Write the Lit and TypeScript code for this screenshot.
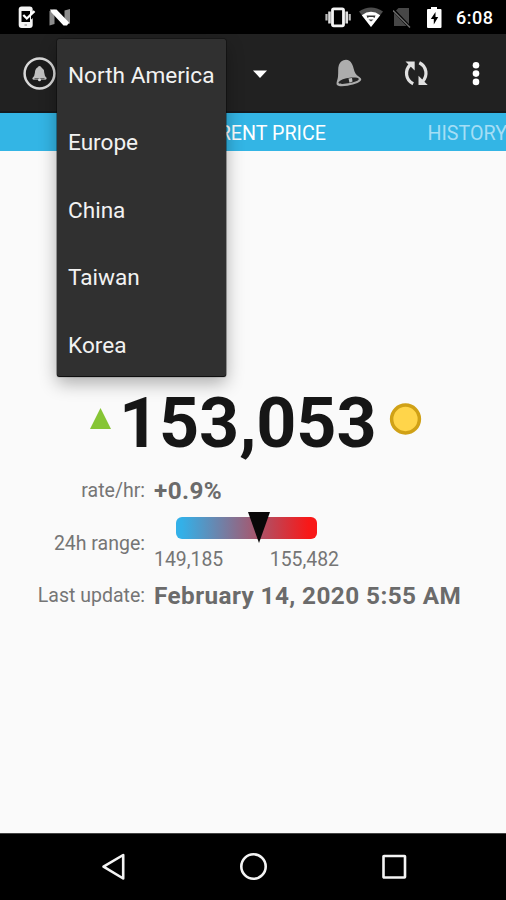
import { LitElement, html, css, svg } from "lit";
import { customElement, property } from "lit/decorators.js";

@customElement("status-bar")
class StatusBar extends LitElement {
  static styles = css`
    :host { display: flex; height: 34px; background: #000; color: #fff; align-items: center; }
    svg { display: block; flex: none; }
    .phone { margin-left: 18px; }
    .n { margin-left: 13px; }
    .gap { flex: 1; }
    .wifi { margin-left: 8px; }
    .sim { margin-left: 10px; }
    .battery { margin-left: 15px; }
    .time { font-size: 18px; font-weight: 500; line-height: 34px; width: 50px; margin-left: 14px; padding-top: 2px; box-sizing: border-box; letter-spacing: 0.5px; }
  `;
  render() {
    return html`
      <svg class="phone" width="18" height="34" viewBox="0 0 18 34">
        <rect x=".7" y="6.500" width="14" height="21.500" rx="3" fill="#f4f4f4"/>
        <path d="M3.500 11h8.500v11H3.500z" fill="#000"/>
        <path d="M13 14.500l4-3v5l-4 3z" fill="#000"/>
        <path d="M5.300 15l3.500 3.500 7.700-7.300" fill="none" stroke="#fff" stroke-width="2.300"/>
        <path d="M6.500 25h2.500" stroke="#999" stroke-width="1.300"/>
      </svg>
      <svg class="n" width="22" height="34" viewBox="0 0 22 34">
        <path d="M.5 11l5-1.500V24l-5 1.500z" fill="#8c8c8c"/>
        <path d="M15.500 10.500l5.500-1.500v14.500l-5.500 1.500z" fill="#8c8c8c"/>
        <path d="M1 9.500h6.500L20 22.500l-2 3h-3.500L2.500 12.500z" fill="#fff"/>
      </svg>
      <span class="gap"></span>
      <svg width="27" height="34" viewBox="0 0 27 34">
        <rect x="8.500" y="8.800" width="11" height="17" rx="1.300" fill="none" stroke="#f4f4f4" stroke-width="2.800"/>
        <path d="M5.500 11.500v12M22.700 11.500v12" stroke="#ddd" stroke-width="2.600"/>
        <path d="M2.500 14v6.500M25.700 14v6.500" stroke="#bbb" stroke-width="2.200"/>
      </svg>
      <svg class="wifi" width="24" height="34" viewBox="0 0 24 34">
        <path d="M0 11.500Q12 3.500 24 11.500L12 27z" fill="#4d4d4d"/>
        <path d="M2.800 15.200Q12 8.500 21.200 15.200L12 27z" fill="#fff"/>
        <path d="M7.500 15.500h9l-1 2.500-1.500-1h-4l-1.500 1z" fill="#333"/>
        <path d="M9.500 19.500h5l-2.500 2z" fill="#444"/>
      </svg>
      <svg class="sim" width="18" height="34" viewBox="0 0 18 34">
        <path d="M5.500 8H16v18H1V12.500z" fill="#474747"/>
        <path d="M0 9.500l17 18" stroke="#000" stroke-width="3"/>
        <path d="M0 10.500l17 17" stroke="#6c6c6c" stroke-width="1.500"/>
      </svg>
      <svg class="battery" width="16" height="34" viewBox="0 0 16 34">
        <path d="M5 7h6v2h3.500q1 0 1 1v17q0 1-1 1H2q-1 0-1-1V10q0-1 1-1h3z" fill="#fff"/>
        <path d="M9.500 12L4.800 19h3v5.500l4.400-7.500H9.500z" fill="#000"/>
      </svg>
      <span class="time">6:08</span>`;
  }
}

@customElement("tool-bar")
class ToolBar extends LitElement {
  static styles = css`
    :host { display: flex; height: 79px; background: #212121; align-items: center; box-sizing: border-box; border-bottom: 2px solid #141a1e; padding-top: 2px; }
    svg { display: block; flex: none; }
    .logo { margin-left: 22px; }
    .caret { margin-left: 196px; }
    .bell { margin-left: 68px; }
    .sync { margin-left: 41px; }
    .more { margin-left: 41px; }
  `;
  render() {
    return html`
      <svg class="logo" width="35" height="36" viewBox="0 0 35 36">
        <circle cx="17.500" cy="17.500" r="14.900" fill="#1c1c1c" stroke="#d8d8d8" stroke-width="2.500"/>
        <path d="M17.500 10q1.500 0 2 1.500 2.500 1.500 2.700 5 .2 3.500 2.500 5.500 0 1.500-1.500 1.700H12q-1.500 0-1.700-1.500 2.400-2 2.600-5.500.2-4 2.600-5.200.5-1.500 2-1.500z" fill="#c0c0c0"/>
        <path d="M12.500 22.800h10" stroke="#444" stroke-width="1"/>
        <circle cx="17.500" cy="23.800" r="1.500" fill="#ddd"/>
      </svg>
      <svg class="caret" width="14" height="36" viewBox="0 0 14 36"><path d="M0 14.500h14l-7 7.500z" fill="#fff"/></svg>
      <svg class="bell" width="28" height="36" viewBox="0 0 28 36">
        <path d="M8.500 4.200Q14 2.500 17 8c1.600 3 1.800 6.700 3.500 9.500 1.500 2.500 5 3.500 5.700 5.500.4 2.500-4.200 4.300-8.200 5.500-5 1.300-13.500 2.800-16 .5-1.200-2 .7-5 1-8.500C3.500 16 2.700 12 3.900 9c.9-2.300 2.400-4.200 4.600-4.800z" fill="#adadad"/>
        <path d="M3.300 26.700c1.500-3 7-4.500 11.500-5 3.500-.3 9-.3 9 1.300 0 2-6 3.500-9 4-4 .7-10 1.700-11.500-.3z" fill="#242424"/>
        <path d="M13.500 22.500l3.500-.5.500 3.500-3 1.200z" fill="#bdbdbd"/>
      </svg>
      <svg class="sync" width="26" height="36" viewBox="0 0 26 36">
        <g fill="none" stroke="#e0e0e0" stroke-width="3.200">
          <path d="M9.200 27.800C1.500 24 .5 14.500 6 9"/>
          <path d="M15.300 6.800c7.700 3.800 8.700 13.300 3.200 18.800"/>
        </g>
        <path d="M1.500 5.500h9.200v9z" fill="#e0e0e0"/>
        <path d="M14.500 19.700v9.300h9.200z" fill="#e0e0e0"/>
      </svg>
      <svg class="more" width="10" height="36" viewBox="0 0 10 36" fill="#fff">
        <circle cx="5" cy="9.300" r="3.300"/><circle cx="5" cy="17.600" r="3.300"/><circle cx="5" cy="25.900" r="3.300"/>
      </svg>`;
  }
}

@customElement("region-menu")
class RegionMenu extends LitElement {
  @property({ attribute: false }) items: string[] = [];
  static styles = css`
    :host { display: block; box-sizing: border-box; width: 169px; height: 337px; padding-top: 2.500px; background: #303030; border-radius: 2px;
      box-shadow: 0 0 0 0.5px rgba(0,0,0,.5), 0 1px 1px #000, 0 7px 18px rgba(0,0,0,.32); }
    .item { height: 67.500px; line-height: 67.500px; padding-left: 11px; font-size: 22.600px; color: #f2f2f2; white-space: nowrap; }
  `;
  render() {
    return this.items.map((t) => html`<div class="item"><span>${t}</span></div>`);
  }
}

@customElement("range-bar")
class RangeBar extends LitElement {
  @property({ type: Number }) low = 0;
  @property({ type: Number }) high = 1;
  @property({ type: Number }) value = 0;
  static styles = css`
    :host { display: block; width: 185px; }
    .track { position: relative; width: 141px; height: 22px; margin-left: 22px; border-radius: 6px; background: linear-gradient(90deg, #33b0e8 4%, #f81818 94%); }
    .slot { position: absolute; left: -2px; right: 22px; top: -5px; }
    svg { position: absolute; left: 0; top: 0; display: block; }
    .ends { display: flex; justify-content: space-between; font-size: 19.400px; line-height: 24px; margin-top: 9px; color: #757575; }
  `;
  render() {
    const pct = ((this.value - this.low) / (this.high - this.low)) * 100;
    return html`
      <div class="track"><div class="slot">
        <svg width="22" height="31" viewBox="0 0 22 31" style="left:${pct}%"><path d="M0 0h22L11 31z" fill="#0a0809"/></svg>
      </div></div>
      <div class="ends"><span>${this.low.toLocaleString("en-US")}</span><span>${this.high.toLocaleString("en-US")}</span></div>`;
  }
}

@customElement("nav-bar")
class NavBar extends LitElement {
  static styles = css`
    :host { display: flex; height: 67px; background: #000; align-items: center; justify-content: space-between; padding: 0 98px 0 100px; box-sizing: border-box; border-top: 1px solid #444; }
    svg { display: block; }
  `;
  render() {
    const shapes = [
      svg`<path d="M3.500 14.700L23.200 3v23.500z"/>`,
      svg`<circle cx="13.500" cy="14.500" r="12.200"/>`,
      svg`<rect x="3.500" y="4" width="21.500" height="21.500" rx=".5"/>`,
    ];
    return shapes.map((s) => html`<svg width="28" height="30" viewBox="0 0 28 30" fill="none" stroke="#f4f4f4" stroke-width="2.600" stroke-linejoin="round">${s}</svg>`);
  }
}

@customElement("app-root")
class AppRoot extends LitElement {
  private regions = ["North America", "Europe", "China", "Taiwan", "Korea"];
  private price = 153053;
  static styles = css`
    :host { display: flex; flex-direction: column; position: relative; width: 506px; height: 900px; overflow: hidden; background: #fafafa; font-family: Roboto, sans-serif; }
    .tabs { display: flex; justify-content: space-between; height: 38px; flex: none; background: #33b5e5; color: #fff; font-size: 19.700px; line-height: 41px; padding-left: 181px; overflow: hidden; white-space: nowrap; }
    .dim { color: #a5def5; margin-right: -1px; }
    .main { flex: 1; padding-top: 229px; }
    .price { display: flex; align-items: center; height: 80px; padding-left: 90px; }
    .price svg { display: block; flex: none; }
    .up { margin-bottom: 3px; }
    .coin { margin-bottom: 2px; }
    .amount { font-size: 70px; font-weight: 700; line-height: 80px; color: #161616; width: 269px; margin-left: 8px; padding-top: 5px; letter-spacing: -0.1px; }
    .rows { display: grid; grid-template-columns: 145px auto; column-gap: 9px; color: #757575; align-items: center; margin-top: 14px; }
    .label { text-align: right; font-size: 19.500px; line-height: 28px; white-space: nowrap; padding-top: 2px; }
    .value { font-size: 24.300px; font-weight: 700; line-height: 30px; padding-top: 2px; color: #6b6b6b; white-space: nowrap; letter-spacing: 0.420px; }
    .range { padding: 11px 0 7px; }
    region-menu { position: absolute; left: 57px; top: 39px; }
    status-bar, tool-bar, nav-bar { flex: none; }
  `;
  render() {
    return html`
      <status-bar></status-bar>
      <tool-bar></tool-bar>
      <div class="tabs"><span class="tab">CURRENT PRICE</span><span class="dim">HISTORY</span></div>
      <div class="main">
        <div class="price">
          <svg class="up" width="21" height="21" viewBox="0 0 21 21"><path d="M10.500 0L21 21H0z" fill="#86c535"/></svg>
          <span class="amount">${this.price.toLocaleString("en-US")}</span>
          <svg class="coin" width="34" height="34" viewBox="0 0 34 34"><circle cx="17.500" cy="17" r="13.900" fill="#ffd54a" stroke="#d0a116" stroke-width="3.500"/></svg>
        </div>
        <div class="rows">
          <span class="label">rate/hr:</span><span class="value">+0.9%</span>
          <span class="label">24h range:</span>
          <range-bar class="range" .low=${149185} .high=${155482} .value=${this.price}></range-bar>
          <span class="label">Last update:</span><span class="value">February 14, 2020 5:55 AM</span>
        </div>
      </div>
      <nav-bar></nav-bar>
      <region-menu .items=${this.regions}></region-menu>`;
  }
}
